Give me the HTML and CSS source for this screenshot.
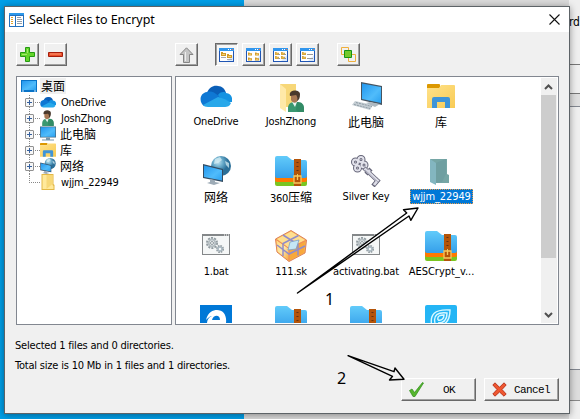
FILE: index.html
```html
<!DOCTYPE html>
<html lang="zh">
<head>
<meta charset="utf-8">
<title>Select Files to Encrypt</title>
<link rel="stylesheet" href="styles.css">
</head>
<body>
<svg class="defs" width="0" height="0" aria-hidden="true">
  <defs>
    <linearGradient id="sky" x1="0" y1="0" x2="1" y2="1"><stop offset="0" stop-color="#2196ee"/><stop offset=".6" stop-color="#50bcfb"/><stop offset="1" stop-color="#2aa0f0"/></linearGradient>
    <linearGradient id="zipblue" x1="0" y1="0" x2="0" y2="1"><stop offset="0" stop-color="#62cbfa"/><stop offset="1" stop-color="#359fea"/></linearGradient>
    <linearGradient id="folder" x1="0" y1="0" x2="1" y2="1"><stop offset="0" stop-color="#ffe28a"/><stop offset="1" stop-color="#f8cb55"/></linearGradient>
    <linearGradient id="box" x1="0" y1="0" x2="1" y2="1"><stop offset="0" stop-color="#ffd87c"/><stop offset=".5" stop-color="#ffe9a8"/><stop offset="1" stop-color="#f5a33a"/></linearGradient>
    <radialGradient id="globe" cx=".35" cy=".3"><stop offset="0" stop-color="#c6e5f1"/><stop offset=".5" stop-color="#6aaccb"/><stop offset="1" stop-color="#2b6f98"/></radialGradient>
  </defs>
  <symbol id="cloud" viewBox="0 0 32 22">
    <path fill="#0a5fb8" d="M7 8C9 2 14 0 18 1c4 0 7 3 8 7l-10 6z"/>
    <path fill="#0f78d4" d="M7 7c4-1 7 0 9 2l8 5-20 7C-1 18-1 8 7 7z"/>
    <path fill="#1593e2" d="M18 10c3-4 7-3 8-2 5 0 7 5 6 9l-8 0z"/>
    <path fill="#28a8ea" d="M3 20l15-8c5 1 9 3 13 6-1 3-4 4-6 4H8c-3 0-4-1-5-2z"/>
  </symbol>
  <symbol id="person" viewBox="0 0 16 22">
    <path fill="#3a9870" d="M0 22v-4c0-4 3-6 6-6l4 0c4 0 6 3 6 6v4z"/>
    <path fill="#e7f3f0" d="M4 12l3 5 2-5z"/>
    <path fill="#247454" d="M9 12l-1 8 2 2h6v-4c0-4-3-6-7-6z" opacity=".35"/>
    <path fill="#a87854" d="M3 4h7v6c-1 3-5 4-7 0z"/>
    <path fill="#49392c" d="M2 6C0-1 12-1 12 4c0 4-1 6-3 7 1-3 0-5-1-6z"/>
  </symbol>
  <symbol id="userfolder" viewBox="0 0 26 30">
    <path fill="#f7d778" d="M1 1h16v23H1z"/><path fill="#ffe9a8" d="M1 1l6 5v23l-6-4z"/>
    <use href="#person" x="9" y="7" width="16" height="22"/>
  </symbol>
  <symbol id="laptop" viewBox="0 0 32 28">
    <path fill="#455461" d="M10 0l21 4v19l-21-5z"/><path fill="url(#sky)" d="M11 1.500l19 3.500v16l-19-4z"/>
    <path fill="#c4cdd3" d="M4 19l18 4-3 5L1 23z"/><path stroke="#8f9ca5" stroke-dasharray="2 1" fill="none" d="M5 20.500l16 4M3 22.500l16 4"/>
    <path fill="#aeb9c1" d="M15 21l4-1 10 2-5 3z"/>
  </symbol>
  <symbol id="library" viewBox="0 0 28 25">
    <path fill="#dc9800" d="M0 5V2q0-1 1-1h11q1 0 1 1v3z"/><path fill="url(#folder)" d="M0 5h12l2-3h13q1 0 1 1v22H0z"/>
    <path fill="#3e94d8" d="M5 25V16q0-2 2-2h14q2 0 2 2v9h-5v-6h-8v6z"/>
  </symbol>
  <symbol id="network" viewBox="0 0 28 29">
    <circle cx="18" cy="10" r="10" fill="url(#globe)"/><path fill="#d5edf3" opacity=".75" d="M12 3l5-2 2 3-4 3-4 1zM22 5l4 2 0 5-3-3z"/>
    <path fill="#344b60" d="M0 8l20 5v13L0 22z"/><path fill="url(#sky)" d="M1 9.500l18 4.500v10.500L1 21z"/>
    <path fill="#9dabb6" d="M7 23l5 1v2l5 1-6 2-7-2 3-1z"/>
  </symbol>
  <symbol id="monitor" viewBox="0 0 16 15">
    <path fill="#456880" d="M0 0h16v11H0z"/><path fill="url(#sky)" d="M.7.7h14.600v9.600H.7z"/><path fill="#7695aa" d="M6 11h4v2h4v1H2v-1h4z"/>
  </symbol>
  <symbol id="zip" viewBox="0 0 32 30">
    <rect y="22" width="32" height="8" rx="2" fill="#7ac522"/><rect y="18" width="32" height="8" rx="2" fill="#ff7900"/>
    <path fill="url(#zipblue)" d="M0 2q0-2 2-2h10l5 4h13q2 0 2 2v14q0 2-2 2H2q-2 0-2-2z"/>
    <path fill="#b45409" d="M19 3h7v27h-7z"/><path stroke="#653012" stroke-dasharray="1 3" fill="none" stroke-width="2" d="M22.500 6v14"/>
    <path stroke="#f7c85c" fill="none" stroke-width="1.300" d="M19 20h7v7h-7zM22.500 18v6"/>
  </symbol>
  <symbol id="key" viewBox="0 0 31 32">
    <g fill="none" stroke="#656578" stroke-width="4"><circle cx="4.500" cy="7" r="2.500"/><circle cx="10" cy="4.500" r="2.500"/><circle cx="6.500" cy="13" r="2.500"/><circle cx="13" cy="10" r="2.500"/></g>
    <g fill="none" stroke="#e2e2eb" stroke-width="2"><circle cx="4.500" cy="7" r="2.500"/><circle cx="10" cy="4.500" r="2.500"/><circle cx="6.500" cy="13" r="2.500"/><circle cx="13" cy="10" r="2.500"/></g>
    <path stroke="#656578" stroke-width="4.400" fill="none" d="M13 13l15 14M28 24l-6 7M15 19l5-5"/>
    <path stroke="#dcdce6" stroke-width="2.800" fill="none" d="M13.500 13.500l14 13M27 25l-4 5M16 18l3-3"/>
    <path stroke="#9a9aae" stroke-width=".8" fill="none" d="M14 15l13 12"/>
  </symbol>
  <symbol id="seldir" viewBox="0 0 19 28">
    <path fill="#76a6a5" d="M0 1h17v15l2 1v8H6z"/><path fill="#67979d" d="M6 5l10-4v15l-4 8-6 1z" opacity=".5"/><path fill="#83b6c0" d="M0 1l6 4v22l-6-3z"/>
  </symbol>
  <symbol id="dir" viewBox="0 0 13 16">
    <path fill="#e3b846" d="M0 0h12v10l1 1v5H0z"/><path fill="#ffe99b" d="M1 1h10v10l1 1v3H1z"/><path fill="#f7d878" d="M5 1h6v9L5 15z"/>
  </symbol>
  <symbol id="bat" viewBox="0 0 28 21">
    <path fill="#848789" d="M0 0h28v21H0z"/><path fill="#f5f7f7" d="M1 2h26v18H1z"/><path stroke="#fff" d="M22 1h1M24 1h1M26 1h1"/>
    <g fill="none" stroke="#8f999e"><circle cx="10" cy="9" r="5" stroke-width="2" stroke-dasharray="2 1.140"/><circle cx="10" cy="9" r="3.400" stroke-width="2" stroke="#b4bdc1"/><circle cx="10" cy="9" r="1.500"/><circle cx="18" cy="15" r="3" stroke-width="2" stroke-dasharray="1.500 .85"/><circle cx="18" cy="15" r="2" stroke="#aab8c1" stroke-width="1.500"/></g>
  </symbol>
  <symbol id="parcel" viewBox="0 0 32 32">
    <path fill="#fbb648" stroke="#dc805c" d="M.5 9L16 .5 31.500 10 30 23 14 31.500 2 22z"/><path fill="#ffdf90" d="M2 9l14-7.500L30 10l-16 8z"/>
    <path fill="url(#box)" d="M1.500 10L14 18.500V30.500L2.500 21.500z"/><path fill="#f6a336" opacity=".7" d="M14 18l16-7-1.500 12L14 30.500z"/><path stroke="#ed8863" fill="none" d="M1 9.500l13 9v12M14 18.500l17-8"/>
    <path stroke="#918cc9" stroke-width="1.500" fill="none" d="M8 5l15 9.500v11M23.500 5.500L8 13.500v12.500M2 15l12 9 16-8"/>
    <path fill="#c5e6f5" stroke="#7196c7" stroke-width=".7" d="M15 12l9-2-3 9-8 1z"/>
  </symbol>
  <symbol id="edge" viewBox="0 0 32 32">
    <path fill="#0078d7" d="M0 0h32v32H0z"/><path fill="#fff" d="M6 15C8 7 13 5 17 5c6 0 10 5 9 13H12c1 6 8 6 13 3v4c-8 4-18 1-18-7 0-3 2-6 5-7-2 0-4 2-6 4zM12 15h8c0-6-7-5-8 0z"/>
  </symbol>
  <symbol id="spiral" viewBox="0 0 32 32">
    <rect width="32" height="32" rx="2" fill="#24b5f5"/>
    <g fill="none" stroke="#d9f8ff" stroke-width="1.400"><path d="M7 22C4 9 10 4 25 5c0 10-4 16-14 16M10 18C8 10 13 7 22 8c0 6-3 10-9 10M13 15c-1-4 2-5 6-5 0 3-2 6-6 5"/></g>
  </symbol>
  <symbol id="frame" viewBox="0 0 15 14">
    <path fill="#2055b4" d="M0 0h15v14H0z"/><path fill="#3196ed" d="M0 0h15v3H0z"/><path fill="#fff" d="M1 3h13v10H1z"/><path fill="#dceafa" d="M8 13l6-6v6z"/><path stroke="#fff" d="M9 1.500h1M11 1.500h1"/><path stroke="#ff7035" d="M13 1.500h1"/>
  </symbol>
  <symbol id="mini" viewBox="0 0 5 4"><path fill="#d29b25" d="M0 0h2v1h3v3H0z"/><path fill="#f3d27a" d="M1 2h3v1H1z"/></symbol>
</svg>

<div class="desktop">
  <aside class="behind">
    <span class="behind-text">rd</span>
    <div class="behind-field"></div><div class="behind-gap"></div><div class="behind-body"></div><div class="behind-foot"></div>
  </aside>
  <main class="dialog">
    <header class="titlebar">
      <svg class="app-icon" viewBox="0 0 15 14"><path fill="#2470bd" d="M0 0h15v14H0z"/><path fill="#fff" d="M1 3h5v10H1zM7 3h7v10H7z"/><path fill="#2c98ea" d="M0 0h15v2H0z"/><path stroke="#e0a32b" stroke-dasharray="1 1" stroke-width="2" fill="none" d="M3 4v8"/><path stroke="#929da8" fill="none" d="M8 4.500h4M8 6.500h5M8 8.500h5M8 10.500h5"/></svg>
      <h1>Select Files to Encrypt</h1>
      <svg class="close" viewBox="0 0 11 11"><path stroke="#111" stroke-width="1.100" d="M.5.5l10 10M10.500.5l-10 10"/></svg>
    </header>
    <nav class="toolbar">
      <button class="tool"><svg width="15" height="15"><path fill="#64d42a" stroke="#249b12" d="M5.500.5h4v5h5v4h-5v5h-4v-5h-5v-4h5z"/><path stroke="#a1eb6c" d="M7.500 2v4M2 7.500h5"/></svg></button>
      <button class="tool after-minus"><svg width="15" height="5"><path fill="#e84f29" stroke="#a61c0b" d="M.5.5h14v4H.5z"/><path stroke="#ff9b78" d="M2 2h11"/></svg></button>
      <button class="tool after-up"><svg width="15" height="16"><path fill="#c5c5c5" stroke="#858585" d="M7.500.8l6.500 6.700h-3.500v8h-6v-8H1z"/><path stroke="#eee" d="M6.500 5v9"/></svg></button>
      <button class="tool pressed"><svg width="15" height="14"><use href="#frame" width="15" height="14"/><use href="#mini" x="2" y="4" width="5" height="4"/><use href="#mini" x="8" y="6" width="5" height="4"/><path stroke="#a9a9ad" d="M2 9.500h5M8 11.500h5"/></svg></button>
      <button class="tool"><svg width="15" height="14"><use href="#frame" width="15" height="14"/><use href="#mini" x="2" y="4" width="4" height="4"/><use href="#mini" x="9" y="4" width="4" height="4"/><use href="#mini" x="2" y="9" width="4" height="4"/><use href="#mini" x="9" y="9" width="4" height="4"/></svg></button>
      <button class="tool"><svg width="15" height="14"><use href="#frame" width="15" height="14"/><use href="#mini" x="2" y="4" width="4" height="3"/><use href="#mini" x="8" y="4" width="4" height="3"/><use href="#mini" x="2" y="8" width="4" height="3"/><use href="#mini" x="8" y="8" width="4" height="3"/><path stroke="#999" d="M5 6.500h2M11 6.500h2M5 10.500h2M11 10.500h2"/></svg></button>
      <button class="tool after-views"><svg width="15" height="14"><use href="#frame" width="15" height="14"/><use href="#mini" x="2" y="4" width="4" height="3"/><use href="#mini" x="2" y="8" width="4" height="3"/><path stroke="#999" d="M7 6.500h6M7 10.500h6"/></svg></button>
      <button class="tool"><svg width="15" height="15"><path fill="none" stroke="#efaf3d" d="M.5.5h7v7h-7zM7.500 7.500h7v7h-7z"/><path fill="#75c92b" stroke="#149314" d="M3.500 3.500h7v7h-7z"/></svg></button>
    </nav>
    <section class="panes">
      <div class="tree">
        <div class="root"><svg width="16" height="12"><path fill="#0873c7" d="M0 0h16v12H0z"/><path fill="url(#sky)" d="M1 1h14v9H1z"/><path stroke="#d9efff" d="M1 11h2M13 11h2"/></svg><span class="cjk focus">桌面</span></div>
        <ul>
          <li><i class="plus"></i><svg class="ti" ><use href="#cloud" y="2" width="16" height="12"/></svg><span class="latin">OneDrive</span></li>
          <li><i class="plus"></i><svg class="ti"><use href="#person" x="1" width="14" height="16"/></svg><span class="latin">JoshZhong</span></li>
          <li><i class="plus"></i><svg class="ti"><use href="#monitor" width="16" height="16"/></svg><span class="cjk">此电脑</span></li>
          <li><i class="plus"></i><svg class="ti"><use href="#library" width="16" height="15"/></svg><span class="cjk">库</span></li>
          <li><i class="plus"></i><svg class="ti"><use href="#network" width="16" height="16"/></svg><span class="cjk">网络</span></li>
          <li class="leaf"><i></i><svg class="ti"><use href="#dir" x="1" width="14" height="16"/></svg><span class="latin">wjjm_22949</span></li>
        </ul>
      </div>
      <div class="files">
        <div class="grid">
          <div class="file"><svg><use href="#cloud" y="5" width="32" height="22"/></svg><span>OneDrive</span></div>
          <div class="file"><svg><use href="#userfolder" x="4" y="3" width="26" height="30"/></svg><span>JoshZhong</span></div>
          <div class="file"><svg><use href="#laptop" x="1" y="2" width="32" height="28"/></svg><span class="cjk">此电脑</span></div>
          <div class="file"><svg><use href="#library" x="2" y="3" width="28" height="25"/></svg><span class="cjk">库</span></div>
          <div class="file"><svg><use href="#network" x="3" y="1" width="28" height="29"/></svg><span class="cjk">网络</span></div>
          <div class="file"><svg><use href="#zip" y="1" width="32" height="30"/></svg><span class="cjk"><b>360</b>压缩</span></div>
          <div class="file"><svg><use href="#key" x="1" width="31" height="32"/></svg><span>Silver Key</span></div>
          <div class="file"><svg><use href="#seldir" x="5" y="3" width="19" height="28"/></svg><span class="selected">wjjm_22949</span></div>
          <div class="file"><svg><use href="#bat" x="2" y="4" width="28" height="21"/></svg><span>1.bat</span></div>
          <div class="file"><svg><use href="#parcel" width="32" height="32"/></svg><span>111.sk</span></div>
          <div class="file"><svg><use href="#bat" x="2" y="4" width="28" height="21"/></svg><span>activating.bat</span></div>
          <div class="file"><svg><use href="#zip" y="1" width="32" height="30"/></svg><span class="long">AESCrypt_v...</span></div>
          <div class="file"><svg><use href="#edge" width="32" height="32"/></svg></div>
          <div class="file"><svg><use href="#zip" y="1" width="32" height="30"/></svg></div>
          <div class="file"><svg><use href="#zip" y="1" width="32" height="30"/></svg></div>
          <div class="file"><svg><use href="#spiral" width="32" height="32"/></svg></div>
        </div>
        <div class="scrollbar">
          <svg width="15" height="17"><path fill="none" stroke="#505050" stroke-width="2" d="M4 11l3.500-3.500L11 11"/></svg>
          <div class="thumb"></div>
          <svg width="15" height="17"><path fill="none" stroke="#505050" stroke-width="2" d="M4 7l3.500 3.500L11 7"/></svg>
        </div>
      </div>
    </section>
    <footer>
      <p>Selected 1 files and 0 directories.</p>
      <p>Total size is 10 Mb in 1 files and 1 directories.</p>
      <div class="actions">
        <button class="action ok"><svg width="15" height="15"><path fill="#55b52d" stroke="#2c8c18" stroke-width=".7" d="M.5 8.500L3 7l2.500 3.500L13.500.5l1 .5L6 14.500H4z"/></svg><span>OK</span></button>
        <button class="action cancel"><svg width="15" height="15"><path fill="#ef5730" stroke="#ac200b" stroke-width=".8" d="M3 .8l4.500 4.500L12 .8 14.200 3 10 7.500l4.200 4.500-2.200 2.200-4.500-4.200L3 14.200.8 12 5 7.500.8 3z"/></svg><span>Cancel</span></button>
      </div>
    </footer>
  </main>
  <svg class="annotations" viewBox="0 0 580 419">
    <g fill="none" stroke="#000" stroke-width="1.400" stroke-linejoin="round">
      <path fill="#fff" d="M297.500 293L406.700 213l-3.200-3.200L418 208l-7.200 12.300-1.800-4.300z"/>
      <path fill="#f0f0f0" d="M348 355.700L394 371.700l1-3.700 9 11.300-14.500.7 3-3.700z"/>
    </g>
    <text x="325" y="305">1</text><text x="337" y="384">2</text>
  </svg>
</div>
</body>
</html>
```
FILE: styles.css
```css
* { box-sizing: border-box; }
body { margin: 0; width: 580px; height: 419px; overflow: hidden; font: 11px/16px "DejaVu Sans Condensed", "DejaVu Sans", sans-serif; font-stretch: condensed; letter-spacing: -.2px; color: #000; }
.defs { position: absolute; }
.desktop { position: relative; width: 580px; height: 419px; padding: 6px 10px 5px 4px; background: linear-gradient(90deg, #009fe8 244px, #dadada 244px); }
.dialog { position: relative; width: 566px; height: 408px; border: 1px solid #5d6367; background: #f0f0f0; box-shadow: 0 1px 7px rgba(0,0,0,.4); display: flex; flex-direction: column; }
.behind { position: absolute; right: 0; top: 0; width: 11px; height: 419px; background: #efefef; display: flex; flex-direction: column; overflow: hidden; }
.behind-text { height: 64px; padding-top: 14px; font-size: 12px; }
.behind-field { height: 30px; border-top: 1px solid #777; border-bottom: 1px solid #777; flex: none; }
.behind-gap { height: 13px; border-bottom: 1px solid #828790; background: #dedede; flex: none; }
.behind-body { height: 263px; border-bottom: 1px solid #828790; flex: none; }
.behind-foot { height: 31px; background: #ddd; border-bottom: 1px solid #888; flex: none; }
.titlebar { display: flex; align-items: center; height: 25px; background: #fff; padding: 0 9px 0 4px; }
.app-icon { width: 15px; height: 14px; }
h1 { margin: 0 auto 0 5px; font: 12.500px/20px "Noto Sans", sans-serif; letter-spacing: -.05px; }
.close { width: 11px; height: 11px; }
.toolbar { display: flex; gap: 4px; padding: 11px 11px 10px; height: 44px; }
.tool { width: 23px; height: 23px; padding: 0; display: grid; place-items: center; background: #f0f0f0; border: 1px solid; border-color: #fff #696969 #696969 #fff; box-shadow: inset -1px -1px #a0a0a0; flex: none; }
.tool:first-child { margin-right: 1px; }
.after-minus { margin-right: 104px; }
.after-up { margin-right: 13px; }
.after-views { margin-right: 14px; }
.pressed { background: #f6f6f6; border-color: #696969 #fff #fff #696969; box-shadow: inset 1px 1px #a0a0a0; }
.panes { display: flex; gap: 3px; padding: 0 9px 0 11px; height: 249px; flex: none; }
.tree { width: 156px; border: 1px solid #828790; background: #fff; padding: 1px 4px; }
.root { display: flex; align-items: center; height: 16px; gap: 3px; }
.cjk { font: 12px/16px "Noto Sans CJK SC", sans-serif; letter-spacing: 0; }
.cjk b { font: 11px "DejaVu Sans Condensed", sans-serif; letter-spacing: -.3px; }
.latin { padding: 1px 0 0 1px; }
.focus { background: #f0f0f0; padding: 0 1px; }
.tree ul { list-style: none; margin: 0; padding: 0 0 0 4px; }
.tree li { display: flex; align-items: center; height: 16px; background: repeating-linear-gradient(0deg, #888 0 1px, transparent 1px 2px) 4px 0 / 1px 16px no-repeat, repeating-linear-gradient(90deg, #888 0 1px, transparent 1px 2px) 4px 8px / 11px 1px no-repeat; }
.tree li.leaf { background-size: 1px 9px, 11px 1px; }
.tree i { width: 9px; height: 9px; flex: none; }
.plus { border: 1px solid #919191; border-radius: 1px; background: linear-gradient(#345f9d, #345f9d) 1px 3px / 5px 1px no-repeat, linear-gradient(#345f9d, #345f9d) 3px 1px / 1px 5px no-repeat, #f7f7f7; }
.ti { width: 16px; height: 16px; margin: 0 4px 0 6px; flex: none; }
.files { width: 384px; border: 1px solid #828790; background: #fff; display: flex; justify-content: space-between; padding: 1px; overflow: hidden; }
.grid { display: grid; grid-template-columns: repeat(4, 75px); grid-auto-rows: 75px; padding: 2px 0 0 1px; height: 245px; overflow: hidden; }
.file { display: flex; flex-direction: column; align-items: center; white-space: nowrap; }
.file svg { width: 32px; height: 32px; margin-bottom: 2px; overflow: visible; flex: none; }
.file span { margin-left: 1px; }
.file .long { letter-spacing: 0; margin-left: 2px; }
.file .selected { background: #0078d7; color: #fff; padding: 0 2px; height: 15px; line-height: 15px; outline: 1px dotted #e79b4b; outline-offset: -1px; letter-spacing: -.1px; margin-left: 2px; }
.scrollbar { width: 16px; background: #f0f0f0; display: flex; flex-direction: column; }
.thumb { height: 163px; width: 15px; margin-bottom: auto; background: #cdcdcd; }
footer { position: relative; padding: 13px 10px 0 10px; }
footer p { margin: 0; height: 20px; }
.actions { display: flex; justify-content: flex-end; gap: 8px; }
.action { display: flex; align-items: center; width: 75px; height: 23px; padding: 0 8px 0 7px; border: 1px solid; border-color: #fff #696969 #696969 #fff; background: #f0f0f0; box-shadow: inset -1px -1px #a0a0a0; justify-content: space-between; font: 11px "Liberation Mono", monospace; letter-spacing: -.6px; color: #000; }
.ok { padding-right: 20px; }
.annotations { position: absolute; inset: 0; width: 580px; height: 419px; font: 16px "Noto Sans", sans-serif; letter-spacing: 0; }
```
